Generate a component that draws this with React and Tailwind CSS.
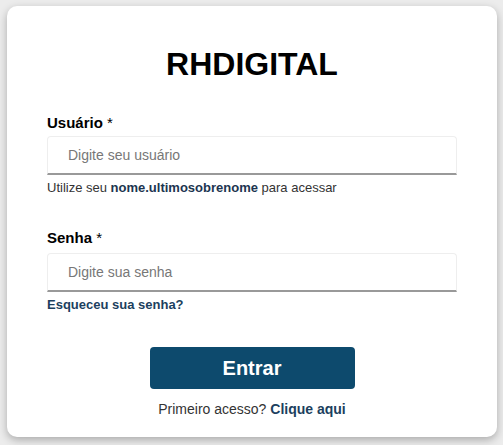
import React from "react";

export default function App() {
  return (
    <div
      className="w-[503px] h-[445px] bg-[#ececec] pt-[6px] pl-[7px] pr-[6px] pb-[8px]"
      style={{ fontFamily: '"Liberation Sans", Arial, sans-serif' }}
    >
      <div className="h-full bg-white rounded-[10px] shadow-[0_3px_8px_rgba(0,0,0,0.28)] px-[40px] pt-[38px]">
        <h1 className="text-center text-[32px] leading-[40px] font-bold text-black">RHDIGITAL</h1>

        <div className="mt-[30px]">
          <label className="block text-[15px] leading-[17px] font-bold text-black">
            Usuário <span className="font-normal">*</span>
          </label>
          <div className="mt-[5px] h-[39px] border border-[#eeeeee] border-b-2 border-b-[#999999] rounded-t-[4px] flex items-center pl-[20px]">
            <span className="text-[14px] text-[#777777]">Digite seu usuário</span>
          </div>
          <p className="mt-[5px] text-[13px] leading-[16px] text-[#333333]">
            Utilize seu <span className="font-bold text-[#1c3550]">nome.ultimosobrenome</span> para acessar
          </p>
        </div>

        <div className="mt-[33px]">
          <label className="block text-[15px] leading-[17px] font-bold text-black">
            Senha <span className="font-normal">*</span>
          </label>
          <div className="mt-[7px] h-[39px] border border-[#eeeeee] border-b-2 border-b-[#999999] rounded-t-[4px] flex items-center pl-[20px]">
            <span className="text-[14px] text-[#777777]">Digite sua senha</span>
          </div>
          <p className="mt-[5px] text-[13px] leading-[16px] font-bold text-[#1c3f5e]">Esqueceu sua senha?</p>
        </div>

        <div className="mt-[34px] flex justify-center">
          <button className="w-[205px] h-[42px] rounded-[4px] bg-[#0d4a6d] text-white text-[20px] font-bold">
            Entrar
          </button>
        </div>
        <p className="mt-[12px] text-center text-[14px] leading-[16px] text-[#333333]">
          Primeiro acesso? <span className="font-bold text-[#1c3f5e]">Clique aqui</span>
        </p>
      </div>
    </div>
  );
}
